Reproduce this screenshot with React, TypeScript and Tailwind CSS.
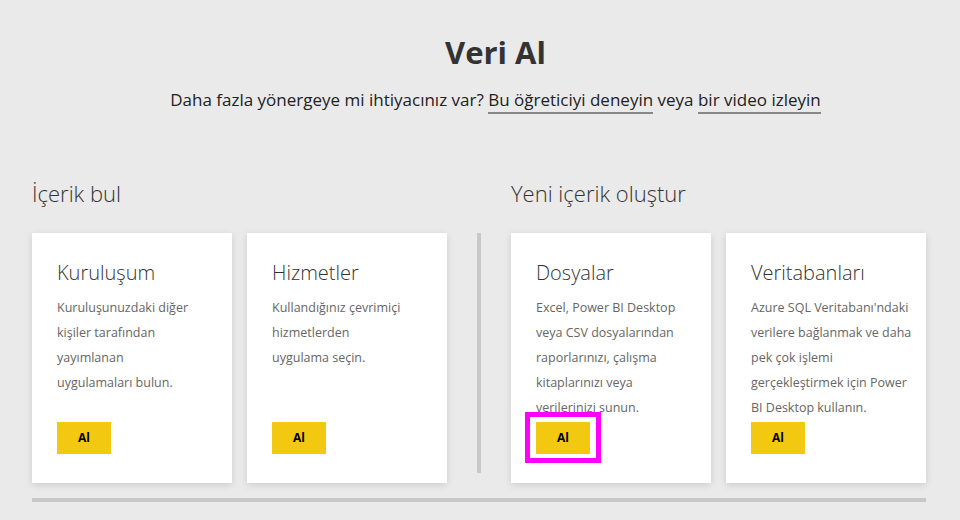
import React from 'react';

type Card = {
  title: string;
  lines: string[];
  highlight?: boolean;
};

const findCards: Card[] = [
  {
    title: 'Kuruluşum',
    lines: ['Kuruluşunuzdaki diğer', 'kişiler tarafından', 'yayımlanan', 'uygulamaları bulun.'],
  },
  {
    title: 'Hizmetler',
    lines: ['Kullandığınız çevrimiçi', 'hizmetlerden', 'uygulama seçin.'],
  },
];

const createCards: Card[] = [
  {
    title: 'Dosyalar',
    lines: [
      'Excel, Power BI Desktop',
      'veya CSV dosyalarından',
      'raporlarınızı, çalışma',
      'kitaplarınızı veya',
      'verilerinizi sunun.',
    ],
    highlight: true,
  },
  {
    title: 'Veritabanları',
    lines: [
      "Azure SQL Veritabanı'ndaki",
      'verilere bağlanmak ve daha',
      'pek çok işlemi',
      'gerçekleştirmek için Power',
      'BI Desktop kullanın.',
    ],
  },
];

function SourceCard({ card }: { card: Card }) {
  return (
    <div className="relative flex h-[250px] w-[200px] flex-col bg-white px-[25px] pt-[26px] pb-[29px] shadow-[0_2px_7px_rgba(0,0,0,0.13)]">
      <h3 className="text-[20px] leading-[28px] font-light text-[#333]">{card.title}</h3>
      <p className="mt-[8px] whitespace-nowrap text-[12.5px] leading-[25px] text-[#666]">
        {card.lines.map((l, i) => (
          <span key={i} className="block">
            {l}
          </span>
        ))}
      </p>
      <div className="relative mt-auto">
        <button className="h-[32px] w-[54px] bg-[#f2c811] text-[12px] font-bold text-black">
          Al
        </button>
        {card.highlight && (
          <div className="absolute top-[-10px] left-[-11px] h-[51px] w-[76px] border-[5px] border-[#ff00ff]" />
        )}
      </div>
    </div>
  );
}

function Section({ heading, cards }: { heading: string; cards: Card[] }) {
  return (
    <div className="w-[415px]">
      <h2 className="text-[22px] leading-[30px] font-light text-[#333]">{heading}</h2>
      <div className="mt-[25px] flex gap-[15px]">
        {cards.map((c) => (
          <SourceCard key={c.title} card={c} />
        ))}
      </div>
    </div>
  );
}

export default function App() {
  return (
    <div
      className="h-[520px] w-[960px] overflow-hidden bg-[#eaeaea] text-[#333]"
      style={{ fontFamily: '"Open Sans", "Noto Sans", sans-serif' }}
    >
      {/* header */}
      <div className="pt-[32px] pl-[31px] text-center">
        <h1 className="text-[31px] leading-[40px] font-bold text-[#333]">Veri Al</h1>
        <p className="mt-[15px] text-[17px] leading-[26px] text-[#222]">
          Daha fazla yönergeye mi ihtiyacınız var?{' '}
          <a className="border-b-2 border-[#888] pb-[1px]">Bu öğreticiyi deneyin</a> veya{' '}
          <a className="border-b-2 border-[#888] pb-[1px]">bir video izleyin</a>
        </p>
      </div>

      <div className="mt-[65px] flex px-[32px]">
        <Section heading="İçerik bul" cards={findCards} />
        <div className="mx-[30px] mt-[55px] h-[240px] w-[4px] bg-[#c8c8c8]" />
        <Section heading="Yeni içerik oluştur" cards={createCards} />
      </div>

      <div className="mx-[32px] mt-[15px] h-[4px] w-[894px] bg-[#c8c8c8]" />
    </div>
  );
}
